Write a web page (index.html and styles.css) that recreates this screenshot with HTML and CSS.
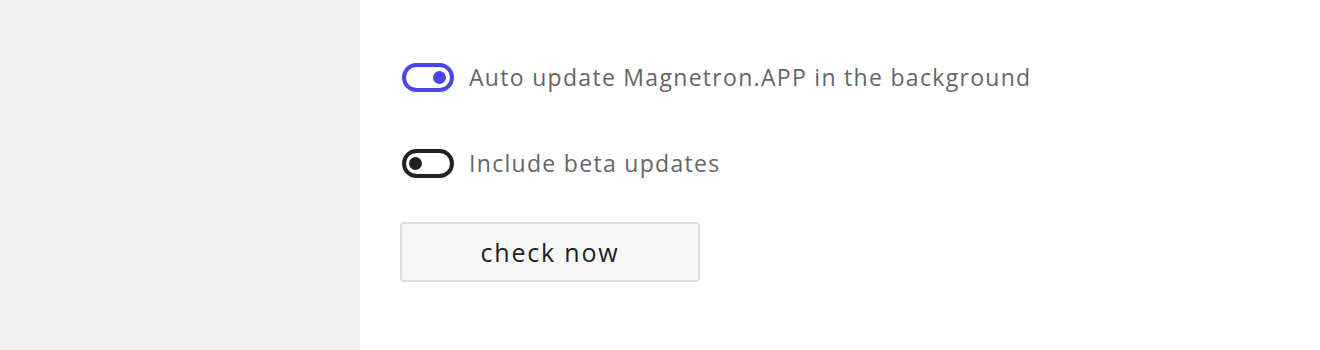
FILE: index.html
```html
<!DOCTYPE html>
<html lang="en">
  <head>
    <meta charset="UTF-8" />
    <meta name="viewport" content="width=device-width, initial-scale=1.0" />
    <title>Updates</title>

    <link rel="stylesheet" href="styles.css">
  </head>
  <body>
    <div class="layout">
      <aside class="sidebar"></aside>

      <main class="content">
        <label class="option">
          <span class="toggle on"><span class="knob"></span></span>
          <span class="label">Auto update Magnetron.APP in the background</span>
        </label>

        <label class="option">
          <span class="toggle"><span class="knob"></span></span>
          <span class="label">Include beta updates</span>
        </label>

        <button class="btn">check now</button>
      </main>
    </div>
  </body>
</html>
```

FILE: styles.css
```css
*,
*::before,
*::after {
  padding: 0;
  margin: 0;
  box-sizing: border-box;
}

body {
  background-color: #ffffff;
  font-family: "Open Sans", "DejaVu Sans", sans-serif;
}

.layout {
  display: flex;
  height: 350px;
}

.sidebar {
  width: 360px;
  background-color: #f0f0f0;
}

.content {
  flex: 1;
  display: flex;
  flex-direction: column;
  align-items: flex-start;
  padding: 63px 0 0 40px;
}

.option {
  display: flex;
  align-items: center;
  gap: 15px;
  height: 29px;
  padding-left: 2px;
  margin-bottom: 57px;
}

.option + .option {
  margin-bottom: 44px;
}

.toggle {
  position: relative;
  width: 52px;
  height: 29px;
  border: 4px solid #222222;
  border-radius: 15px;
}

.toggle .knob {
  position: absolute;
  top: 4px;
  left: 3px;
  width: 13px;
  height: 13px;
  border-radius: 50%;
  background-color: #222222;
}

.toggle.on {
  border-color: #4a46ea;
}

.toggle.on .knob {
  left: auto;
  right: 4px;
  background-color: #4a46ea;
}

.label {
  font-size: 23px;
  line-height: 29px;
  margin-top: -1px;
  color: #666666;
  letter-spacing: 1.3px;
}

.btn {
  width: 300px;
  height: 60px;
  background-color: #f7f7f7;
  border: 2px solid #dddddd;
  border-radius: 4px;
  font-family: "Open Sans", "DejaVu Sans", sans-serif;
  font-size: 25px;
  letter-spacing: 1.8px;
  color: #222222;
}
```
